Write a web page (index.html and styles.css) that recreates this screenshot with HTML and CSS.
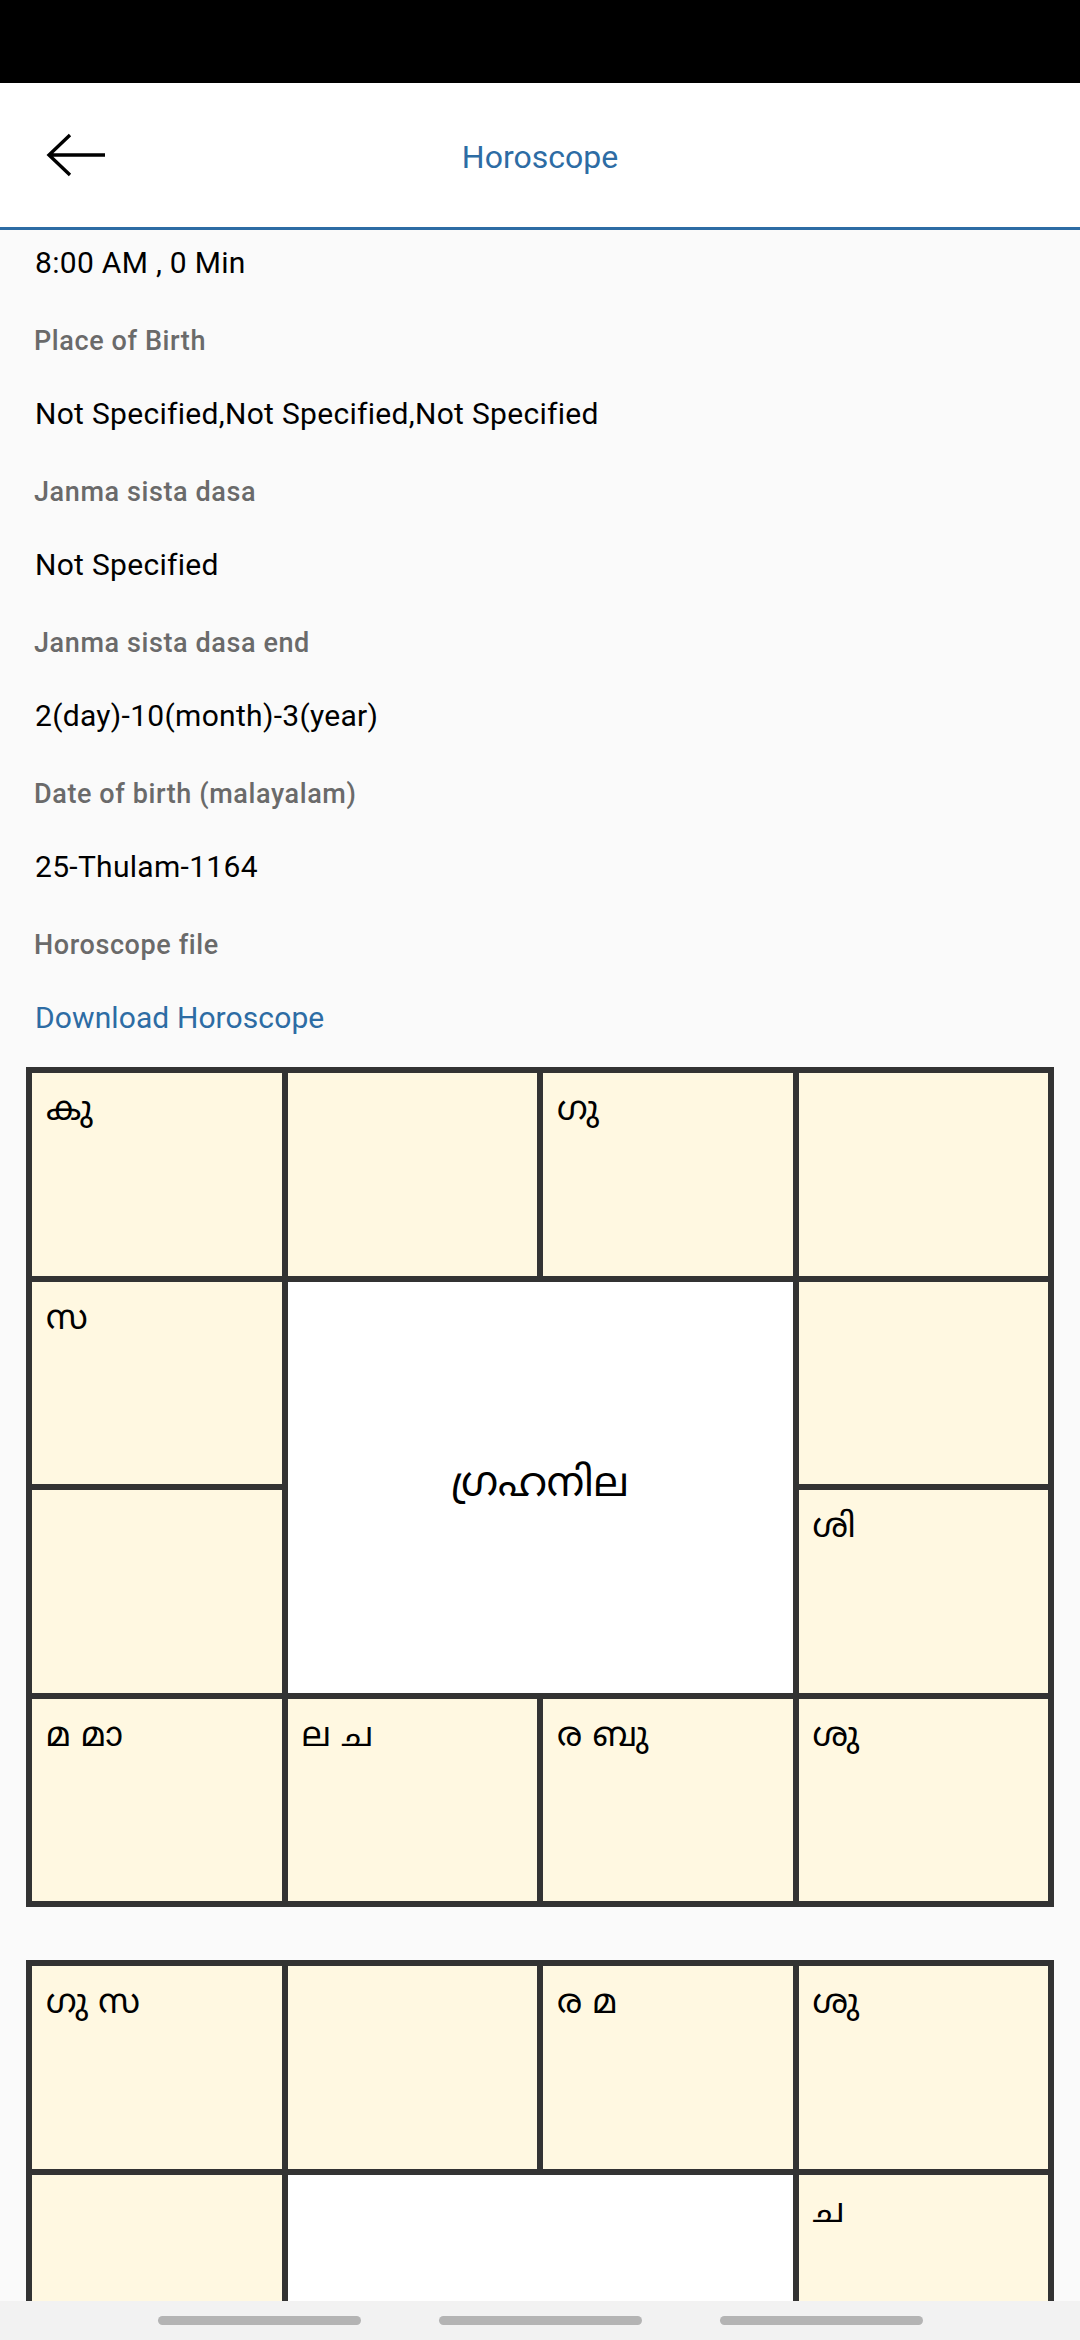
FILE: index.html
```html
<!DOCTYPE html>
<html lang="en">
<head>
<meta charset="utf-8">
<title>Horoscope</title>
<link rel="stylesheet" href="styles.css">
</head>
<body>
<div class="app">
  <div class="status-bar"></div>
  <header class="app-header">
    <div class="back">
      <svg class="back-icon" width="62" height="46" viewBox="0 0 62 46" aria-hidden="true">
        <path d="M4 23 H60 M25 3 L4 23 L25 43" fill="none" stroke="#000" stroke-width="3.4" stroke-linejoin="miter"/>
      </svg>
    </div>
    <h1 class="title">Horoscope</h1>
    <div></div>
  </header>

  <main class="content">
    <div class="value value-first">8:00 AM , 0 Min</div>

    <div class="label">Place of Birth</div>
    <div class="value">Not Specified,Not Specified,Not Specified</div>

    <div class="label">Janma sista dasa</div>
    <div class="value">Not Specified</div>

    <div class="label">Janma sista dasa end</div>
    <div class="value">2(day)-10(month)-3(year)</div>

    <div class="label">Date of birth (malayalam)</div>
    <div class="value">25-Thulam-1164</div>

    <div class="label">Horoscope file</div>
    <div class="value link">Download Horoscope</div>

    <div class="chart">
      <div class="cell">കു</div>
      <div class="cell"></div>
      <div class="cell">ഗു</div>
      <div class="cell"></div>
      <div class="cell">സ</div>
      <div class="cell center">ഗ്രഹനില</div>
      <div class="cell"></div>
      <div class="cell"></div>
      <div class="cell">ശി</div>
      <div class="cell">മ മാ</div>
      <div class="cell">ല ച</div>
      <div class="cell">ര ബു</div>
      <div class="cell">ശു</div>
    </div>

    <div class="chart chart-second">
      <div class="cell">ഗു സ</div>
      <div class="cell"></div>
      <div class="cell">ര മ</div>
      <div class="cell">ശു</div>
      <div class="cell"></div>
      <div class="cell center"></div>
      <div class="cell">ച</div>
      <div class="cell"></div>
      <div class="cell"></div>
      <div class="cell"></div>
      <div class="cell"></div>
      <div class="cell"></div>
      <div class="cell"></div>
    </div>
  </main>

  <nav class="nav-bar">
    <span class="pill"></span>
    <span class="pill"></span>
    <span class="pill"></span>
  </nav>
</div>
</body>
</html>
```

FILE: styles.css
```css
* {
  box-sizing: border-box;
}

html, body {
  margin: 0;
  padding: 0;
}

body {
  width: 1080px;
  height: 2340px;
  overflow: hidden;
  background: #fafafa;
  font-family: Roboto, "Noto Sans", "Noto Sans Malayalam", sans-serif;
  color: #000;
}

.app {
  height: 2340px;
  display: flex;
  flex-direction: column;
}

.status-bar {
  height: 83px;
  flex: none;
  background: #000;
}

.app-header {
  flex: none;
  height: 147px;
  background: #fff;
  border-bottom: 3px solid #2d6ca4;
  display: grid;
  grid-template-columns: 1fr auto 1fr;
  align-items: center;
}

.back {
  display: flex;
  align-items: center;
  padding-left: 45px;
}

.back-icon {
  display: block;
}

.title {
  margin: 0;
  padding-top: 3px;
  font-family: Roboto, sans-serif;
  font-weight: 400;
  font-size: 32px;
  color: #2d6ca4;
}

.content {
  flex: 1;
  overflow: hidden;
  padding: 0 26px;
}

.label {
  padding: 38px 0 0 8px;
  line-height: 40px;
  font-size: 27px;
  font-weight: 500;
  letter-spacing: 0.6px;
  color: #6a6a6a;
}

.value {
  padding: 33px 0 0 9px;
  line-height: 40px;
  font-size: 30px;
  letter-spacing: 0.3px;
  color: #000;
}

.value-first {
  padding-top: 13px;
}

.link {
  color: #2d6ca4;
  letter-spacing: 0.1px;
}

.chart {
  margin-top: 29px;
  display: grid;
  grid-template-columns: repeat(4, 1fr);
  grid-auto-rows: 202.5px;
  gap: 6px;
  padding: 6px;
  background: #333;
}

.chart-second {
  margin-top: 53px;
}

.cell {
  background: #fff8e1;
  padding: 19px 14px;
  font-family: "Noto Sans Malayalam", "Noto Sans", sans-serif;
  font-size: 34px;
  line-height: 40px;
  color: #000;
}

.cell.center {
  grid-column: span 2;
  grid-row: span 2;
  background: #fff;
  display: flex;
  align-items: center;
  justify-content: center;
  padding: 0;
  font-size: 41px;
}

.nav-bar {
  flex: none;
  height: 39px;
  background: #f2f2f2;
  display: flex;
  align-items: center;
  justify-content: center;
  gap: 78px;
}

.pill {
  width: 203px;
  height: 9px;
  border-radius: 5px;
  background: #b4b4b4;
}
```
